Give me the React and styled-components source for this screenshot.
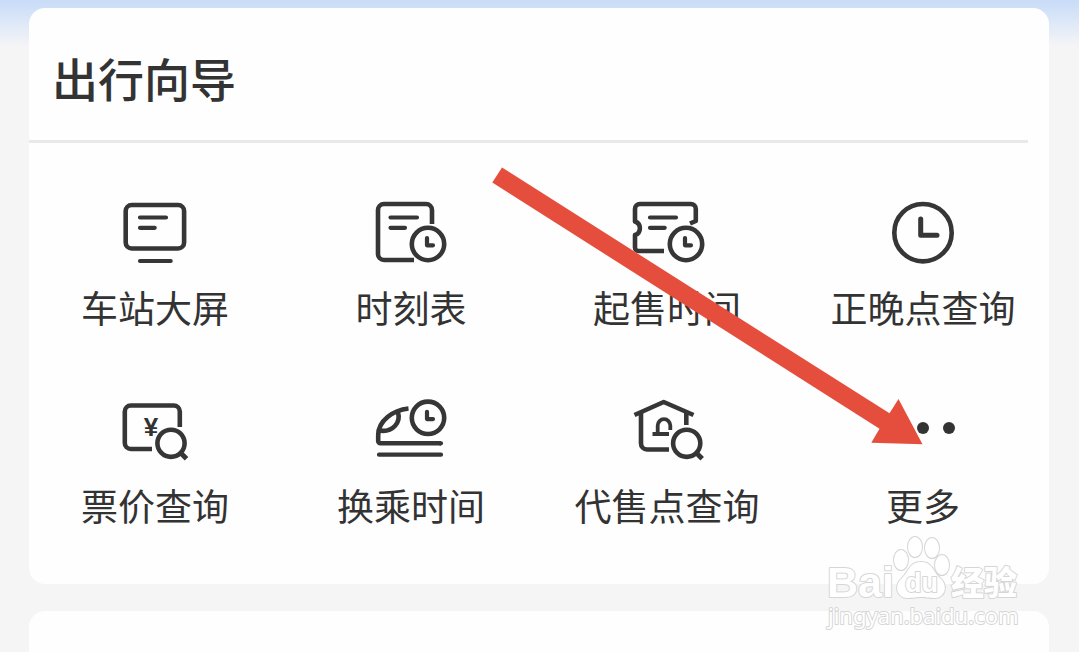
import React from 'react';
import styled, { createGlobalStyle } from 'styled-components';

const GlobalStyle = createGlobalStyle`
    * {
        box-sizing: border-box;
    }

    body {
        margin: 0;
        color: #333;
        background: #f5f5f6;
        font-family: 'Noto Sans CJK SC', 'Noto Sans', sans-serif;
    }
`;

const Page = styled.main`
    position: relative;
    display: flex;
    flex-direction: column;
    gap: 27px;
    min-height: 100vh;
    padding: 8px 30px 0 29px;
    overflow: hidden;
    background: linear-gradient(#c8dbf8 0, #d3e2f8 12px, #f5f5f6 46px);
`;

const Card = styled.section`
    position: relative;
    background: #fefefe;
    border-radius: 16px;
`;

const NextCard = styled(Card)`
    flex: 1;
    min-height: 40px;
    border-radius: 16px 16px 0 0;
`;

const CardHeader = styled.header`
    margin-right: 21px;
    padding: 35px 23px 29px;
    border-bottom: 3px solid #e9e9e9;
`;

const Title = styled.h1`
    margin: 0;
    font-size: 46px;
    font-weight: 500;
    line-height: 68px;
`;

const Services = styled.nav`
    display: grid;
    grid-template-columns: repeat(4, 1fr);
    row-gap: 59px;
    margin: 0 -2px;
    padding: 47px 0 57px;
`;

const Service = styled.button`
    display: flex;
    flex-direction: column;
    align-items: center;
    gap: 15px;
    padding: 0;
    border: 0;
    background: none;
    color: inherit;
    font-family: inherit;
    font-size: 37px;
    line-height: 44px;
    white-space: nowrap;
    cursor: pointer;
`;

const Glyph = styled.svg`
    width: 96px;
    height: 80px;
    fill: none;
    stroke: #363636;
    stroke-width: 4.6;
    stroke-linejoin: round;

    .round {
        stroke-width: 4.2;
        stroke-linecap: round;
    }

    .solid {
        fill: #333;
        stroke: none;
    }
`;

const Pointer = styled.svg`
    position: absolute;
    top: 159px;
    left: 463px;
    width: 431px;
    height: 278px;
    fill: #e54e3d;
    pointer-events: none;
`;

const Watermark = styled.svg`
    position: absolute;
    right: 55px;
    top: 534px;
    width: 200px;
    height: 100px;
    fill: #fff;
    stroke: #d6d6d6;
    stroke-width: 2;
    stroke-linejoin: round;
    paint-order: stroke;
    pointer-events: none;

    .brand {
        font: 700 43px 'Liberation Sans', sans-serif;
    }

    .du {
        font: 700 27px 'Liberation Sans', sans-serif;
    }

    .product {
        font: 900 33px 'Noto Sans CJK SC', sans-serif;
    }

    .address {
        font: 400 22px 'Noto Sans', sans-serif;
    }
`;

const SmallClock = ({ x, y }) => {
    return (
        <g transform={`translate(${x} ${y})`}>
            <circle r="16.2" />
            <path className="round" d="M-1 -6V1.3H5" />
        </g>
    );
};

const Magnifier = ({ x, y }) => {
    return (
        <g transform={`translate(${x} ${y})`}>
            <circle r="13.6" />
            <path d="M9.5 9.5L15.5 15.5" strokeWidth="5" />
        </g>
    );
};

const icons = {
    screen: (
        <>
            <rect x="18.7" y="15" width="58.4" height="43.5" rx="6" />
            <path className="round" d="M33 27.5H59M33 37.8H47.7M33 71H63.7" />
        </>
    ),
    timetable: (
        <>
            <path d="M69 34V20a6 6 0 0 0-6-6H21a6 6 0 0 0-6 6V64a6 6 0 0 0 6 6H51" />
            <path className="round" d="M27.5 27.5H54M27.5 37.8H42" />
            <SmallClock x={65} y={54} />
        </>
    ),
    ticket: (
        <>
            <path d="M71 33.5L76.8 31V19a5 5 0 0 0-5-5H21a5 5 0 0 0-5 5V31.5C22.5 33.5 22.5 43 16 45V57.5a3.5 3.5 0 0 0 3.5 3.5H45" />
            <path className="round" d="M31 27.5H57M31 37.8H45.7" />
            <SmallClock x={67} y={54} />
        </>
    ),
    clock: (
        <>
            <circle cx="48" cy="42.7" r="28.7" />
            <path d="M45.7 29V45.3H62" strokeWidth="5" strokeLinecap="round" />
        </>
    ),
    fare: (
        <>
            <path d="M72.8 39V23.5a6 6 0 0 0-6-6H23.8a6 6 0 0 0-6 6V55a6 6 0 0 0 6 6H45" />
            <text className="solid" x="44" y="48" fontSize="26" fontWeight="700" fontFamily="Liberation Sans, sans-serif" textAnchor="middle">
                ¥
            </text>
            <Magnifier x={64} y={55.3} />
        </>
    ),
    train: (
        <>
            <path d="M45.5 20.5C30 22 15.2 33 15.2 47V53a2.3 2.3 0 0 0 2.3 2.3H78" />
            <path d="M35 24.5C38 34 30 45 16 42.5" />
            <path className="round" d="M16 66.7H78M77 55.3H78" />
            <SmallClock x={65} y={29.8} />
        </>
    ),
    agency: (
        <>
            <path d="M15.5 27L44.7 14L74.5 27" />
            <path d="M22 24V55.5a6 6 0 0 0 6 6H50M67.3 24V37" />
            <path d="M33.5 46H50M38.7 46V37.5a6.3 6.3 0 0 1 12.6 0V42" strokeWidth="3.8" />
            <Magnifier x={67.7} y={55.3} />
        </>
    ),
    more: (
        <g className="solid">
            <circle cx="22" cy="40" r="6" />
            <circle cx="48" cy="40" r="6" />
            <circle cx="74" cy="40" r="6" />
        </g>
    ),
};

const services = [
    { icon: 'screen', label: '车站大屏' },
    { icon: 'timetable', label: '时刻表' },
    { icon: 'ticket', label: '起售时间' },
    { icon: 'clock', label: '正晚点查询' },
    { icon: 'fare', label: '票价查询' },
    { icon: 'train', label: '换乘时间' },
    { icon: 'agency', label: '代售点查询' },
    { icon: 'more', label: '更多' },
];

const App = () => {
    return (
        <>
            <GlobalStyle />
            <Page>
                <Card>
                    <CardHeader>
                        <Title>出行向导</Title>
                    </CardHeader>
                    <Services>
                        {services.map(({ icon, label }) => {
                            return (
                                <Service key={icon} type="button">
                                    <Glyph viewBox="0 0 96 80" aria-hidden="true">
                                        {icons[icon]}
                                    </Glyph>
                                    <span>{label}</span>
                                </Service>
                            );
                        })}
                    </Services>
                    <Pointer viewBox="0 0 431 278" aria-hidden="true">
                        <path d="M10 .5L397.5 246.3L406.5 232L430.5 277.3L379.3 275.7L387.5 261.7L.3 15.5Z" />
                    </Pointer>
                </Card>
                <NextCard />
                <Watermark viewBox="0 0 200 100">
                    <text className="brand" x="3" y="63">
                        Bai
                    </text>
                    <ellipse cx="77" cy="26" rx="7" ry="10" />
                    <ellipse cx="91" cy="13" rx="7" ry="10" />
                    <ellipse cx="108" cy="14" rx="7" ry="10" />
                    <ellipse cx="118" cy="31" rx="7" ry="10" />
                    <path d="M97 28c-12 0-12 10-19 16-8 7-6 19 5 20 6 0 9-1 14-1s8 1 14 1c11-1 13-13 5-20-7-6-7-16-19-16Z" />
                    <text className="du" x="81" y="58">
                        du
                    </text>
                    <text className="product" x="127" y="61">
                        经验
                    </text>
                    <text className="address" x="4" y="90">
                        jingyan.baidu.com
                    </text>
                </Watermark>
            </Page>
        </>
    );
};

export default App;
